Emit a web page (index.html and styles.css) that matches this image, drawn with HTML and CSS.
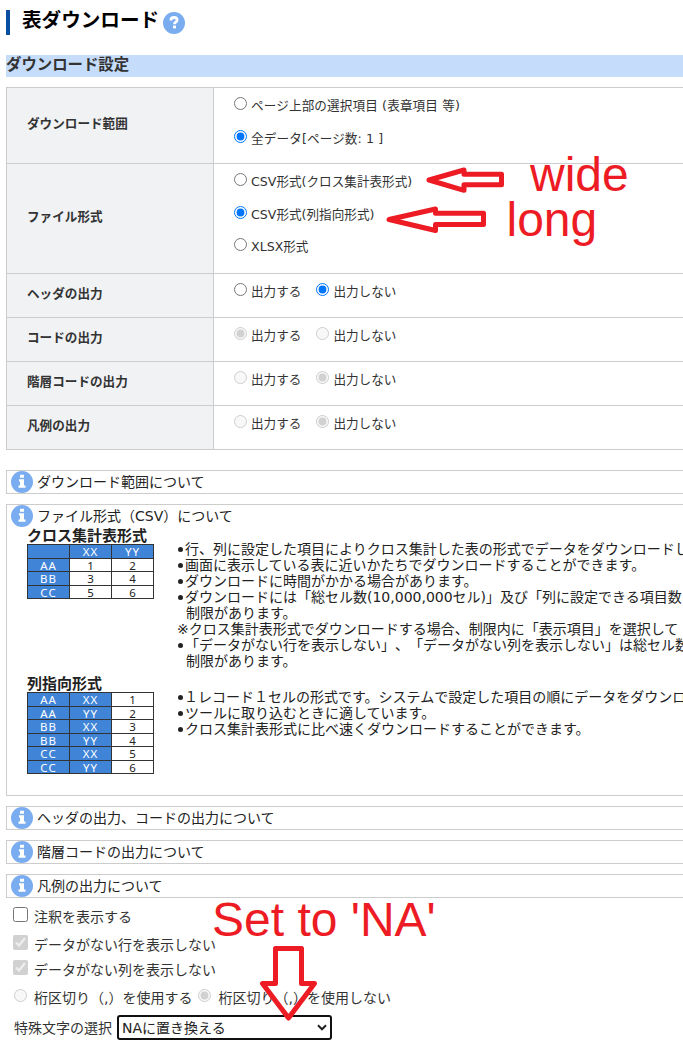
FILE: index.html
```
<!DOCTYPE html>
<html lang="ja">
<head>
<meta charset="utf-8">
<title>表ダウンロード</title>
<link rel="stylesheet" href="styles.css">
</head>
<body>
<main class="page">
  <header class="title-bar">
    <h1 class="title">表ダウンロード</h1>
    <svg class="help" viewBox="0 0 22 22"><circle cx="11" cy="11" r="11" fill="#7aacf0"/><path d="M8 8.5V7.4Q8.3 5.5 11 5.5Q14.1 5.5 14.1 8Q14.1 9.4 12.6 10.2Q11.5 10.8 11.5 12.2" fill="none" stroke="#fff" stroke-width="2.8"/><rect x="10" y="13.6" width="3" height="2.8" fill="#fff"/></svg>
  </header>
  <h2 class="section">ダウンロード設定</h2>

  <div class="settings">
    <div class="row row-range">
      <div class="label">ダウンロード範囲</div>
      <div class="options stacked">
        <label class="opt"><input type="radio" name="range"><span class="wider">ページ上部の選択項目 (表章項目 等)</span></label>
        <label class="opt"><input type="radio" name="range" checked><span class="wider">全データ[ページ数: 1 ]</span></label>
      </div>
    </div>
    <div class="row row-format">
      <div class="label">ファイル形式</div>
      <div class="options stacked">
        <label class="opt"><input type="radio" name="format">CSV形式(クロス集計表形式)</label>
        <label class="opt"><input type="radio" name="format" checked>CSV形式(列指向形式)</label>
        <label class="opt"><input type="radio" name="format">XLSX形式</label>
      </div>
    </div>
    <div class="row">
      <div class="label">ヘッダの出力</div>
      <div class="options">
        <label class="opt"><input type="radio" name="head">出力する</label>
        <label class="opt"><input type="radio" name="head" checked>出力しない</label>
      </div>
    </div>
    <div class="row">
      <div class="label">コードの出力</div>
      <div class="options">
        <label class="opt"><input type="radio" name="code" checked disabled>出力する</label>
        <label class="opt"><input type="radio" name="code" disabled>出力しない</label>
      </div>
    </div>
    <div class="row">
      <div class="label">階層コードの出力</div>
      <div class="options">
        <label class="opt"><input type="radio" name="level" disabled>出力する</label>
        <label class="opt"><input type="radio" name="level" checked disabled>出力しない</label>
      </div>
    </div>
    <div class="row">
      <div class="label">凡例の出力</div>
      <div class="options">
        <label class="opt"><input type="radio" name="legend" disabled>出力する</label>
        <label class="opt"><input type="radio" name="legend" checked disabled>出力しない</label>
      </div>
    </div>
  </div>

  <svg class="defs" width="0" height="0"><symbol id="info" viewBox="0 0 22 22"><circle cx="11" cy="11" r="11" fill="#7aacf0"/><path d="M9 3.8h4v3H9zM8 8.2h5v6.2h1.5v2.3h-7v-2.3H9v-3.9H8z" fill="#fff"/></symbol></svg>

  <section class="info"><div class="info-head"><svg class="icon"><use href="#info"/></svg>ダウンロード範囲について</div></section>
  <section class="info info-open">
    <div class="info-head"><svg class="icon"><use href="#info"/></svg>ファイル形式（CSV）について</div>
    <div class="format format-cross">
      <div class="sample">
        <h3 class="sample-title">クロス集計表形式</h3>
        <div class="grid">
          <b></b><b>XX</b><b>YY</b>
          <b>AA</b><i>1</i><i>2</i>
          <b>BB</b><i>3</i><i>4</i>
          <b>CC</b><i>5</i><i>6</i>
        </div>
      </div>
      <div class="notes">
        <p class="dot">行、列に設定した項目によりクロス集計した表の形式でデータをダウンロードし</p>
        <p class="dot">画面に表示している表に近いかたちでダウンロードすることができます。</p>
        <p class="dot">ダウンロードに時間がかかる場合があります。</p>
        <p class="dot">ダウンロードには「総セル数(10,000,000セル)」及び「列に設定できる項目数</p>
        <p class="indent">制限があります。</p>
        <p>※クロス集計表形式でダウンロードする場合、制限内に「表示項目」を選択して</p>
        <p class="dot">「データがない行を表示しない」、「データがない列を表示しない」は総セル数</p>
        <p class="indent">制限があります。</p>
      </div>
    </div>
    <div class="format">
      <div class="sample">
        <h3 class="sample-title">列指向形式</h3>
        <div class="grid">
          <b>AA</b><b>XX</b><i>1</i>
          <b>AA</b><b>YY</b><i>2</i>
          <b>BB</b><b>XX</b><i>3</i>
          <b>BB</b><b>YY</b><i>4</i>
          <b>CC</b><b>XX</b><i>5</i>
          <b>CC</b><b>YY</b><i>6</i>
        </div>
      </div>
      <div class="notes">
        <p class="dot dot-wide">１レコード１セルの形式です。システムで設定した項目の順にデータをダウンロ</p>
        <p class="dot">ツールに取り込むときに適しています。</p>
        <p class="dot">クロス集計表形式に比べ速くダウンロードすることができます。</p>
      </div>
    </div>
  </section>
  <section class="info"><div class="info-head"><svg class="icon"><use href="#info"/></svg>ヘッダの出力、コードの出力について</div></section>
  <section class="info"><div class="info-head"><svg class="icon"><use href="#info"/></svg>階層コードの出力について</div></section>
  <section class="info"><div class="info-head"><svg class="icon"><use href="#info"/></svg>凡例の出力について</div></section>

  <form class="display">
    <label class="check first"><input type="checkbox">注釈を表示する</label>
    <label class="check"><input type="checkbox" checked disabled>データがない行を表示しない</label>
    <label class="check"><input type="checkbox" checked disabled>データがない列を表示しない</label>
    <div class="digits">
      <label class="opt"><input type="radio" name="digit" disabled>桁区切り（,）を使用する</label>
      <label class="opt"><input type="radio" name="digit" checked disabled>桁区切り（,）を使用しない</label>
    </div>
    <div class="special">
      <span>特殊文字の選択</span>
      <div class="select-box">
        <select class="select"><option>NAに置き換える</option></select>
        <svg class="chevron" viewBox="0 0 10 7"><path d="M1 1.3l4 4 4-4" fill="none" stroke="#222" stroke-width="2"/></svg>
      </div>
    </div>
  </form>
</main>

<svg class="marks" width="683" height="1054" viewBox="0 0 683 1054">
  <g fill="none" stroke="#ed1c24" stroke-width="5" stroke-linejoin="round">
    <path d="M429 180L464 170V174.3H501.5V184.7H464V190.3Z"/>
    <path d="M389 219.5L435.5 209V213.3H483.5V224.5H435.5V230.5Z"/>
    <path d="M275.5 948.5H301.5V983.5H314.5L288.5 1018L262.5 983.5H275.5Z"/>
  </g>
  <g class="mark-text">
    <text x="530" y="191">wide</text>
    <text x="506.5" y="236">long</text>
    <text x="212" y="935.5">Set to 'NA'</text>
  </g>
</svg>
</body>
</html>
```
FILE: styles.css
```
* { box-sizing: border-box; }

body {
  margin: 0;
  width: 683px;
  height: 1054px;
  overflow: hidden;
  position: relative;
  background: #fff;
  color: #222;
  font: 14px/16px "DejaVu Sans", "Noto Sans CJK JP", sans-serif;
  text-spacing-trim: space-all;
}

h1, h2, h3, p { margin: 0; }
input { margin: 0; flex: none; }

.page { padding: 10px 0 0 6px; }

.title-bar {
  display: flex;
  height: 25px;
  border-left: 4px solid #0a4ea2;
  padding-left: 12px;
}
.title {
  font-size: 19.6px;
  line-height: 22px;
  color: #000;
  white-space: nowrap;
}
.help { width: 22px; height: 22px; margin: 2px 0 0 4px; }

.section {
  margin: 20px 0 10px;
  height: 22px;
  background: #c5dcfa;
  font-size: 15.4px;
  line-height: 20px;
  color: #333;
}

.settings {
  border: solid #ccc;
  border-width: 1px 0 0 1px;
  font-size: 12.6px;
  color: #333;
}
.row {
  display: flex;
  height: 44px;
  border-bottom: 1px solid #ccc;
}
.row-range { height: 76px; }
.row-format { height: 110px; }
.label {
  width: 207px;
  flex: none;
  display: flex;
  align-items: center;
  padding: 0 0 3px 20px;
  border-right: 1px solid #ccc;
  background: #f0f2f4;
  font-weight: bold;
}
.options {
  display: flex;
  gap: 15px;
  padding: 9px 0 0 20px;
}
.stacked { flex-direction: column; gap: 16px; }
.opt {
  display: flex;
  gap: 4px;
  height: 16px;
  line-height: 18px;
  white-space: nowrap;
}
.wider { letter-spacing: 0.13px; }
.stacked .opt { height: 16.5px; }
.opt input { width: 13px; height: 13px; }

.defs { display: block; }
.settings + .defs { margin-bottom: 20px; }

.info {
  height: 24px;
  margin-bottom: 10px;
  border: solid #ccc;
  border-width: 1px 0 1px 1px;
}
.info-open { height: 292px; overflow: hidden; }
.info-head {
  display: flex;
  gap: 4px;
  padding-left: 4px;
  height: 22px;
  line-height: 22px;
}
.icon { width: 22px; height: 22px; }

.format { display: flex; padding-left: 20px; }
.format-cross { height: 148px; }
.sample { width: 128px; flex: none; padding-top: 1px; }
.sample-title {
  font-size: 15px;
  line-height: 17px;
  height: 16px;
  white-space: nowrap;
}
.grid {
  display: grid;
  grid-template-columns: repeat(3, 41px);
  grid-auto-rows: 12.5px;
  gap: 1px;
  width: 127px;
  padding: 1px;
  background: #333;
  font: 11.5px/13px "Noto Sans", sans-serif;
  text-align: center;
}
.grid b { background: #4084d7; color: #fff; font-weight: normal; letter-spacing: 1px; }
.grid i { background: #fff; color: #222; font-style: normal; }

.notes { padding: 14px 0 0 22px; white-space: nowrap; }
.notes p { height: 16px; }
.dot { display: flex; align-items: center; gap: 2px; }
.dot::before {
  content: "";
  width: 5px;
  height: 5px;
  flex: none;
  margin-left: 1px;
  border-radius: 50%;
  background: #222;
}
.dot-wide { gap: 1px; }
.indent { padding-left: 9px; }

.display { padding: 0 0 0 7px; color: #333; }
.check {
  display: flex;
  gap: 6px;
  height: 25px;
  line-height: 19px;
}
.first { height: 28px; }
.check input { width: 15px; height: 15px; margin-top: -1px; }
.digits { display: flex; gap: 6px; padding: 3px 0 0 1px; height: 29px; }
.digits .opt { gap: 7px; line-height: 18px; }
.special { display: flex; gap: 5px; padding-left: 1px; line-height: 27px; }
.select-box { position: relative; width: 215px; height: 25px; }
.select {
  appearance: none;
  width: 215px;
  height: 25px;
  padding: 1px 3px 0;
  border: 2px solid #101010;
  border-radius: 3px;
  background: #fff;
  color: #222;
  font: inherit;
  line-height: 20px;
}
.chevron { position: absolute; right: 5px; top: 9px; width: 10px; height: 7px; }

.marks { position: absolute; left: 0; top: 0; }
.mark-text { font: 48px "Liberation Sans", Arial, sans-serif; fill: #ed1c24; }
```
